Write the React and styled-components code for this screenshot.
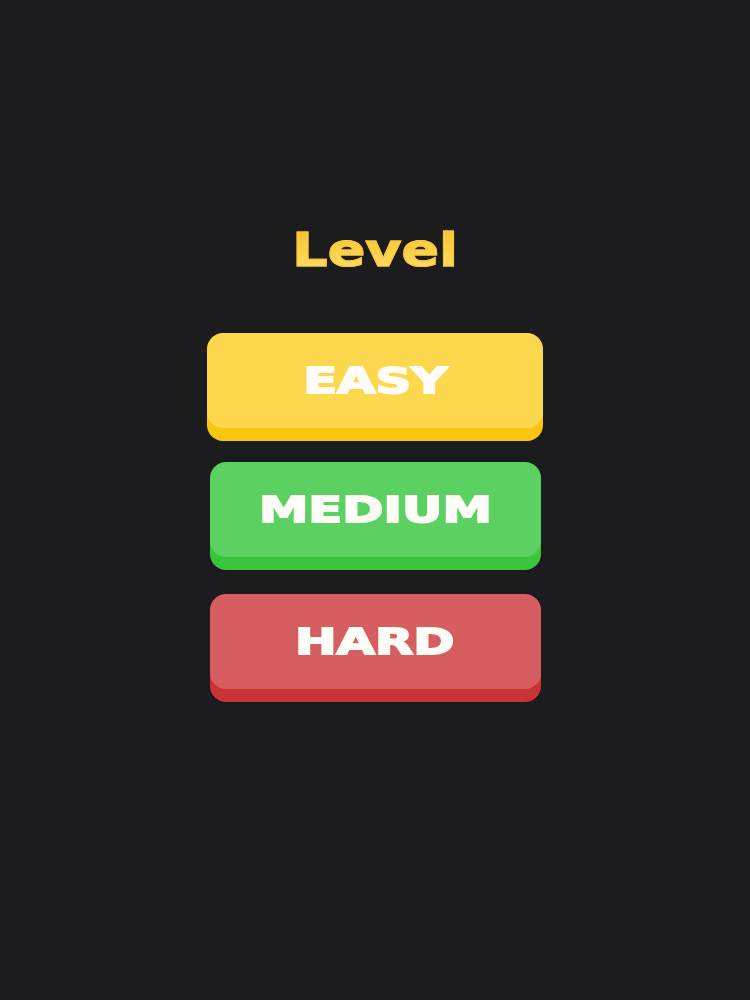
import React from "react";
import styled, { createGlobalStyle } from "styled-components";

const GlobalStyle = createGlobalStyle`
  html, body {
    margin: 0;
    padding: 0;
    background: #1c1b1d;
  }
  #root {
    min-height: 100vh;
  }
`;

const Screen = styled.main`
  min-height: 1000px;
  display: flex;
  flex-direction: column;
  align-items: center;
  padding-top: 224px;
  box-sizing: border-box;
  font-family: "DejaVu Sans", "Liberation Sans", Arial, sans-serif;
`;

const Title = styled.h1`
  margin: 0 0 57px;
  height: 52px;
  display: flex;
  align-items: center;
  justify-content: center;
`;

const TitleText = styled.span`
  display: inline-block;
  font-size: 47px;
  font-weight: 700;
  line-height: 52px;
  transform: scaleX(1.18);
  background: linear-gradient(180deg, #f6bf2a 0%, #fbd24c 55%, #fde072 100%);
  -webkit-background-clip: text;
  background-clip: text;
  color: transparent;
  -webkit-text-stroke: 1.2px #f9c83a;
`;

const LevelList = styled.div`
  display: flex;
  flex-direction: column;
  align-items: center;
  gap: 34px;
`;

const LevelButton = styled.button`
  width: ${(p) => p.$width}px;
  height: 95px;
  margin-top: ${(p) => p.$offset}px;
  border: none;
  border-radius: 16px;
  background: ${(p) => p.$face};
  box-shadow: 0 13px 0 ${(p) => p.$lip};
  display: flex;
  align-items: center;
  justify-content: center;
  padding: 0;
  cursor: pointer;
  font-family: inherit;
`;

const ButtonLabel = styled.span`
  display: inline-block;
  color: #fffdf8;
  font-size: 36px;
  font-weight: 700;
  line-height: 1;
  -webkit-text-stroke: 1.8px #fffdf8;
  transform: scaleX(1.38);
`;

const levels = [
  { label: "EASY", face: "#fdd84f", lip: "#f8c60f", width: 336, offset: 0 },
  { label: "MEDIUM", face: "#5bd162", lip: "#3bc43e", width: 331, offset: 0 },
  { label: "HARD", face: "#d65e60", lip: "#cb3437", width: 331, offset: 3 },
];

export default function App() {
  return (
    <>
      <GlobalStyle />
      <Screen>
        <Title>
          <TitleText>Level</TitleText>
        </Title>
        <LevelList>
          {levels.map((lvl) => (
            <LevelButton
              key={lvl.label}
              $face={lvl.face}
              $lip={lvl.lip}
              $width={lvl.width}
              $offset={lvl.offset}
            >
              <ButtonLabel>{lvl.label}</ButtonLabel>
            </LevelButton>
          ))}
        </LevelList>
      </Screen>
    </>
  );
}
